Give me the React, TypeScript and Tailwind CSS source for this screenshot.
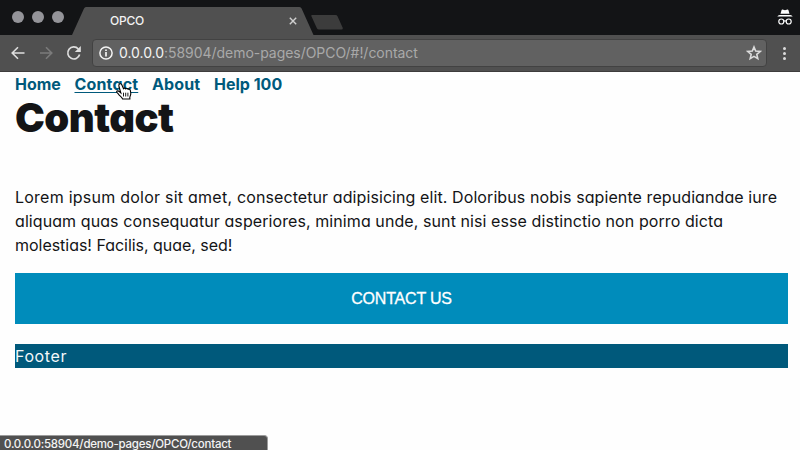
const NAV = [
  { label: 'Home', cls: 'w-[45.500px] tracking-[0px]' },
  { label: 'Contact', cls: 'w-[63.500px] tracking-[0.150px] underline decoration-1 underline-offset-2' },
  { label: 'About', cls: 'w-[48px] tracking-[0.100px]' },
  { label: 'Help 100', cls: 'w-[70px] tracking-[0px]' },
];

function TabStrip() {
  return (
    <div className="relative flex h-[35px] bg-[#131416]">
      <div className="flex gap-[8px] pt-[11px] pl-[12px]">
        <span className="size-[12px] rounded-full bg-[#949499]" />
        <span className="size-[12px] rounded-full bg-[#949499]" />
        <span className="size-[12px] rounded-full bg-[#949499]" />
      </div>
      <svg className="absolute inset-0" width="800" height="35" viewBox="0 0 800 35">
        <path d="M72 35 L84 8.500 Q84.700 7 86 7 H299.500 Q301 7 301.600 8.500 L313.500 35 Z" fill="#505050" />
        <path d="M311.500 15 H335.500 Q337 15 337.500 16.200 L342.800 28 Q343 29.500 341.500 29.500 H319 Q317.500 29.500 317 28.500 L311.300 16 Z" fill="#3c3c3c" />
        <path d="M289.800 17.800 l6.400 6.400 M296.200 17.800 l-6.400 6.400" stroke="#d0d0d0" strokeWidth="1.400" />
        <g fill="#fff">
          <path d="M780.500 13.700 L781.600 10 Q781.800 9.400 782.500 9.600 L785 10.200 L787.500 9.600 Q788.200 9.400 788.400 10 L789.500 13.700 Z" />
          <path d="M777.300 16.500 Q778 15.300 779.800 14.900 H790.200 Q792 15.300 792.700 16.500 Z" />
        </g>
        <g fill="none" stroke="#fff" strokeWidth="1.200">
          <circle cx="781.300" cy="21.500" r="2.500" />
          <circle cx="788.700" cy="21.500" r="2.500" />
          <path d="M783.800 21.200 Q785 20.300 786.200 21.200" />
        </g>
      </svg>
      <span className="absolute top-[12px] left-[110px] text-[12px] leading-[18px] font-medium text-[#f2f2f2] tracking-[-0.200px]">OPCO</span>
    </div>
  );
}

function Toolbar() {
  return (
    <div className="flex h-[37px] items-center border-b border-[#3e3c3c] bg-[#505050] pl-[10px]">
      <svg width="16" height="16" viewBox="0 0 16 16" fill="none" stroke="#dedede" strokeWidth="1.600">
        <path d="M14.500 8 H2.500 M8 2.200 L2.200 8 L8 13.800" />
      </svg>
      <svg className="ml-[12px]" width="16" height="16" viewBox="0 0 16 16" fill="none" stroke="#7b7b7b" strokeWidth="1.600">
        <path d="M2 8 H13.500 M8 2.200 L13.800 8 L8 13.800" />
      </svg>
      <svg className="ml-[12px]" width="16" height="16" viewBox="0 0 16 16" fill="none" stroke="#dedede" strokeWidth="1.700">
        <path d="M13.600 9.500 A6 6 0 1 1 12.300 4" />
        <path d="M14.800 1 V7 H8.800 Z" fill="#dedede" stroke="none" />
      </svg>
      <div className="ml-[10px] flex h-[28px] w-[675px] items-center rounded-[4px] border border-[#424242] bg-[#616161] pl-[6px]">
        <svg width="14" height="14" viewBox="0 0 14 14" fill="none" stroke="#f4f4f4">
          <circle cx="7" cy="7" r="6.100" strokeWidth="1.500" />
          <path d="M7 6 V10.500 M7 3.500 V5" strokeWidth="1.700" />
        </svg>
        <span className="ml-[6px] text-[14px] leading-[20px] tracking-[-0.040px] whitespace-nowrap text-[#a9a9a9]">
          <span className="text-[#f4f4f4]">0.0.0.0</span>:58904/demo-pages/OPCO/#!/contact
        </span>
        <svg className="mr-[4px] ml-auto" width="16" height="16" viewBox="0 0 16 16" fill="none" stroke="#dcdcdc" strokeWidth="1.600">
          <path d="M8 2 L9.700 6.100 L14.200 6.500 L10.800 9.400 L11.800 13.700 L8 11.400 L4.200 13.700 L5.200 9.400 L1.800 6.500 L6.300 6.100 Z" />
        </svg>
      </div>
      <div className="ml-[16px] flex flex-col gap-[2px]">
        <span className="size-[3px] rounded-full bg-[#dcdcdc]" />
        <span className="size-[3px] rounded-full bg-[#dcdcdc]" />
        <span className="size-[3px] rounded-full bg-[#dcdcdc]" />
      </div>
    </div>
  );
}

function HandCursor() {
  return (
    <svg className="absolute top-[82px] left-[115px]" width="18" height="19" viewBox="0 0 18 19">
      <path
        d="M4.300 2.200 C5.300 1.300 6.400 1.700 6.800 2.700 L8.500 6.700 C9.100 5.900 10.300 6 10.800 6.900 C11.500 6.200 12.700 6.400 13.100 7.300 C14.100 6.800 15 7.200 15.300 8.300 L15.800 11 C16 13 15 14.200 14.800 15.300 L14.900 17 H7.600 C7 15.200 4.800 14 3.500 12.200 C2.800 11.200 1.400 10.500 1.600 9.600 C1.900 8.500 3.400 8.700 4.300 9.500 L5.800 10.800 L4 4.500 C3.700 3.600 3.700 2.800 4.300 2.200 Z"
        fill="#fff"
        stroke="#000"
        strokeWidth="1.100"
      />
      <path d="M8.500 10.700 V14.500 M10.700 10.700 V14.500 M12.900 10.700 V14.500" stroke="#000" strokeWidth="0.900" />
    </svg>
  );
}

export default function App() {
  return (
    <div className="relative flex h-[450px] w-[800px] flex-col overflow-hidden bg-[#fefefe] font-['Inter',sans-serif]">
      <TabStrip />
      <Toolbar />
      <main className="flex flex-col pr-[12px] pl-[15px] text-[16px] leading-[24px] text-[#131416] [font-feature-settings:'cv11']">
        <nav className="flex gap-[14px] font-bold whitespace-nowrap text-[#00597b]">
          {NAV.map((n) => (
            <a key={n.label} className={n.cls}>{n.label}</a>
          ))}
        </nav>
        <h1 className="h-[89px] text-[40px] leading-[44px] font-black tracking-[-0.550px]">Contact</h1>
        <p className="whitespace-nowrap">
          <span className="block tracking-[0.090px]">
            <span className="tracking-[0.240px]">Lorem ipsum dolor sit amet, </span>
            consectetur adipisicing elit. Doloribus nobis sapiente repudiandae iure
          </span>
          <span className="block tracking-[0.085px]">aliquam quas consequatur asperiores, minima unde, sunt nisi esse distinctio non porro dicta</span>
          <span className="block tracking-[-0.030px]">molestias! Facilis, quae, sed!</span>
        </p>
        <button className="mt-[16px] h-[51px] bg-[#008cbb] text-center font-['Liberation_Sans',sans-serif] text-[16px] tracking-[-0.200px] text-white [-webkit-text-stroke:0.300px_white]">
          CONTACT US
        </button>
        <footer className="mt-[20px] h-[24px] bg-[#00597b] tracking-[0.600px] text-[#f4f8fa]">Footer</footer>
      </main>
      <HandCursor />
      <div className="absolute bottom-0 left-0 h-[15px] w-[268px] rounded-tr-[4px] border-t border-r border-[#9c9c9c] bg-[#505050] pl-[4px] text-[11.500px] leading-[16px] font-medium tracking-[-0.230px] whitespace-nowrap text-[#f4f4f4]">
        0.0.0.0:58904/demo-pages/OPCO/contact
      </div>
    </div>
  );
}
